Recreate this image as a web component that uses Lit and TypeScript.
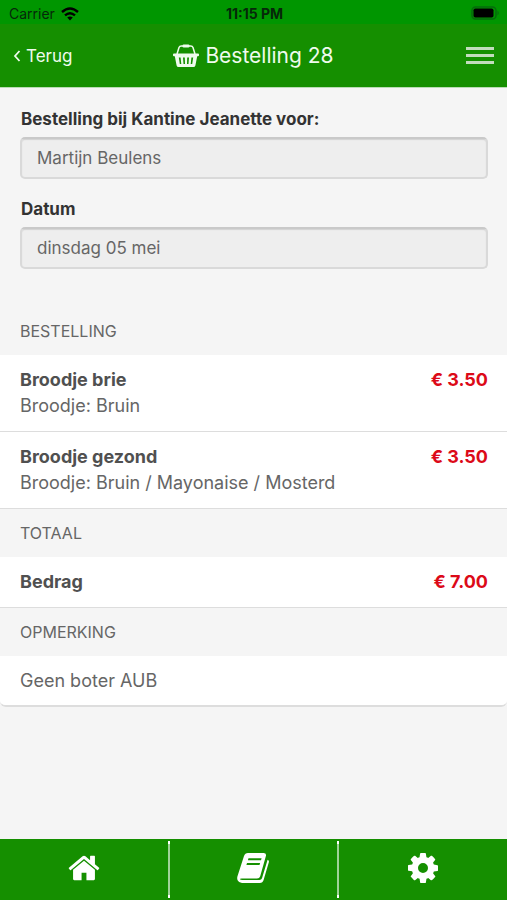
import { LitElement, html, css, svg } from "lit";
import { customElement, property } from "lit/decorators.js";

const basketIcon = svg`
  <path d="M4 10 L6 3.500 Q6.600 2 8.200 2 H17.800 Q19.400 2 20 3.500 L22 10" fill="none" stroke="currentColor" stroke-width="1.500"/>
  <rect x="9.500" y=".5" width="7" height="3" rx="1.200" fill="currentColor"/>
  <path fill="currentColor" fill-rule="evenodd" d="M1 9.500 H25 Q26 9.500 26 10.500 V11.200 Q26 12.200 25 12.200 H24.200 L22.400 21.500 Q22 23 20.500 23 H5.500 Q4 23 3.600 21.500 L1.800 12.200 H1 Q0 12.200 0 11.200 V10.500 Q0 9.500 1 9.500 Z
    M5.800 13.500 L6.800 20 H8.300 L7.600 13.500 Z M10 13.500 L10.500 20 H12 L11.800 13.500 Z M14.200 13.500 L14 20 H15.500 L16 13.500 Z M18.400 13.500 L17.700 20 H19.200 L20.200 13.500 Z"/>`;

const homeIcon = svg`<path fill="currentColor" d="M1472 992v480q0 26-19 45t-45 19h-384v-384h-256v384h-384q-26 0-45-19t-19-45v-480q0-1 .5-3t.5-3l575-474 575 474q1 2 1 6zm223-69l-62 74q-8 9-21 11h-3q-13 0-21-7l-692-577-692 577q-12 8-24 7-13-2-21-11l-62-74q-8-10-7-23.500t11-21.500l719-599q32-26 76-26t76 26l244 204v-195q0-14 9-23t23-9h192q14 0 23 9t9 23v408l219 182q10 8 11 21.500t-7 23.500z"/>`;

const bookIcon = svg`
  <path fill="currentColor" fill-rule="evenodd" d="M11 0 H26.500 Q29.700 0 28.900 3 L23.200 23.200 Q22.500 25.400 20 25.400 H4.500 Q2.800 25.400 2.900 26 Q3.100 27 5.500 27 H22.500 Q24.400 27 25 25.200 L30.600 6.800 Q32.300 7.400 31.900 9 L26.600 27 Q25.700 30 22.800 30 H5 Q1.800 30 .6 27.300 Q-.1 25.600 .4 23.500 L7 3 Q8 0 11 0 Z
    M11.500 5.200 L10.900 7.300 H24 L24.600 5.200 Z M10 10 L9.400 12.100 H22.500 L23.100 10 Z"/>`;

const gearIcon = svg`<path fill="currentColor" d="M1152 896q0-106-75-181t-181-75-181 75-75 181 75 181 181 75 181-75 75-181zm512-109v222q0 12-8 23t-20 13l-185 28q-19 54-39 91 35 50 107 138 10 12 10 25t-9 23q-27 37-99 108t-94 71q-12 0-26-9l-138-108q-44 23-91 38-16 136-29 186-7 28-36 28h-222q-14 0-24.500-8.500t-11.500-21.500l-28-184q-49-16-90-37l-141 107q-10 9-25 9-14 0-25-11-126-114-165-168-7-10-7-23 0-12 8-23 15-21 51-66.500t54-70.500q-27-50-41-99l-183-27q-13-2-21-12.500t-8-23.500v-222q0-12 8-23t19-13l186-28q14-46 39-92-40-57-107-138-10-12-10-24 0-10 9-23 26-36 98.500-107.500t94.500-71.500q13 0 26 10l138 107q44-23 91-38 16-136 29-186 7-28 36-28h222q14 0 24.500 8.500t11.500 21.500l28 184q49 16 90 37l142-107q9-9 24-9 13 0 25 10 129 119 165 170 7 8 7 22 0 12-8 23-15 21-51 66.500t-54 70.500q26 50 41 98l183 28q13 2 21 12.500t8 23.500z"/>`;

@customElement("status-bar")
class StatusBar extends LitElement {
  static styles = css`
    :host {
      display: grid;
      grid-template-columns: 1fr auto 1fr;
      align-items: center;
      height: 24px;
      padding: 0 7px 0 9px;
      box-sizing: border-box;
      background: #009600;
      color: #06280a;
      font-size: 14px;
      line-height: 20px;
    }
    .carrier { display: flex; align-items: center; gap: 6px; padding-top: 4px; }
    .time { font-weight: 700; padding-top: 4px; }
    .battery { justify-self: end; display: block; padding-top: 2px; }
  `;
  render() {
    return html`
      <span class="carrier">Carrier
        <svg width="18" height="14" viewBox="0 0 18 14" aria-hidden="true">
          <g fill="none" stroke="#000" stroke-width="2.400">
            <path d="M1 5 Q9 -2 17 5"/>
            <path d="M4 8.400 Q9 4 14 8.400"/>
          </g>
          <path d="M6.200 10.400 Q9 8.400 11.800 10.400 L9 13.400 Z"/>
        </svg>
      </span>
      <span class="time">11:15 PM</span>
      <svg class="battery" width="29" height="14" viewBox="0 0 29 14" aria-hidden="true">
        <rect x="1" y="1" width="24" height="12" rx="3.500" fill="none" stroke="#066b0c" stroke-width="1.500"/>
        <rect x="2.500" y="2.500" width="20" height="9" rx="1.800" fill="#000"/>
        <path d="M26.500 4.500 Q29 7 26.500 9.500 Z" fill="#066b0c"/>
      </svg>`;
  }
}

@customElement("order-field")
class OrderField extends LitElement {
  @property() label = "";
  @property() value = "";
  static styles = css`
    :host { display: flex; flex-direction: column; gap: 6px; }
    label { padding-left: 1px; font-size: 17px; line-height: 24px; font-weight: 700; color: #333; }
    input {
      width: 100%;
      height: 42px;
      box-sizing: border-box;
      margin: 0;
      padding: 0 15px;
      border: 2px solid #d9d9d9;
      border-top-color: #c9c9c9;
      border-radius: 5px;
      background: #eee;
      box-shadow: inset 0 1px 1px #d2d2d2;
      color: #666;
      font: inherit;
      font-size: 17px;
      outline: none;
    }
  `;
  render() {
    return html`<label for="field">${this.label}</label>
      <input id="field" type="text" readonly .value=${this.value} />`;
  }
}

interface Line { title?: string; detail?: string; price?: string; }
interface Section { heading: string; lines: Line[]; }

const sections: Section[] = [
  {
    heading: "BESTELLING",
    lines: [
      { title: "Broodje brie", detail: "Broodje: Bruin", price: "€ 3.50" },
      { title: "Broodje gezond", detail: "Broodje: Bruin / Mayonaise / Mosterd", price: "€ 3.50" },
    ],
  },
  { heading: "TOTAAL", lines: [{ title: "Bedrag", price: "€ 7.00" }] },
  { heading: "OPMERKING", lines: [{ detail: "Geen boter AUB" }] },
];

@customElement("order-list")
class OrderList extends LitElement {
  static styles = css`
    :host {
      display: block;
      overflow: hidden;
      border-radius: 0 0 6px 6px;
      border-bottom: 2px solid #ddd;
    }
    h2 {
      margin: 0;
      padding: 12px 20px;
      background: #f5f5f5;
      color: #666;
      font-size: 16px;
      line-height: 24px;
      font-weight: 400;
    }
    ul { margin: 0; padding: 0; list-style: none; }
    li {
      display: grid;
      grid-template-columns: 1fr auto;
      padding: 12px 19px 12px 20px;
      border-bottom: 1px solid #ddd;
      background: #fff;
      font-size: 18px;
      line-height: 26px;
      color: #666;
    }
    section:last-child li { border-bottom: 0; padding-bottom: 11px; }
    .title { font-weight: 700; color: #505050; }
    .price { font-weight: 700; color: #dc0a18; }
    .detail { grid-column: 1 / -1; }
  `;
  render() {
    return sections.map(
      (s) => html`<section>
        <h2>${s.heading}</h2>
        <ul>
          ${s.lines.map(
            (l) => html`<li>
              ${l.title ? html`<span class="title">${l.title}</span>` : ""}
              ${l.price ? html`<span class="price">${l.price}</span>` : ""}
              ${l.detail ? html`<span class="detail">${l.detail}</span>` : ""}
            </li>`
          )}
        </ul>
      </section>`
    );
  }
}

@customElement("app-root")
class AppRoot extends LitElement {
  static styles = css`
    :host {
      display: flex;
      flex-direction: column;
      min-height: 100vh;
      background: #f5f5f5;
      font-family: Inter, "Liberation Sans", sans-serif;
    }
    .bar {
      display: grid;
      grid-template-columns: 1fr auto 1fr;
      align-items: center;
      height: 64px;
      box-sizing: border-box;
      padding: 0 13px;
      background: #158f00;
      border-bottom: 1px solid #b9dcb4;
      color: #effbed;
    }
    .back {
      display: flex;
      align-items: center;
      gap: 5px;
      color: inherit;
      font-size: 17px;
      line-height: 24px;
      text-decoration: none;
    }
    h1 {
      display: flex;
      align-items: center;
      gap: 6px;
      margin: 0;
      font-size: 21px;
      line-height: 28px;
      font-weight: 400;
    }
    .menu {
      justify-self: end;
      display: flex;
      flex-direction: column;
      gap: 4px;
      width: 28px;
      padding: 0;
      border: 0;
      background: none;
    }
    .line { height: 3px; background: #c2dcbc; }
    main { flex: 1; }
    .fields {
      display: flex;
      flex-direction: column;
      gap: 18px;
      padding: 19px 19px 38px 20px;
    }
    .tabs {
      position: sticky;
      bottom: 0;
      display: grid;
      grid-template-columns: 1fr 2px 1fr 2px 1fr;
      height: 61px;
      background: #158f00;
    }
    .tab {
      display: flex;
      align-items: center;
      justify-content: center;
      padding-bottom: 3px;
      color: #fff;
    }
    .rule {
      margin: 2px 0;
      background: linear-gradient(#fff 3px, #9fd398 3px calc(100% - 3px), #fff calc(100% - 3px));
    }
  `;
  render() {
    return html`
      <status-bar></status-bar>
      <header class="bar">
        <a class="back" href="#terug">
          <svg width="8" height="12" viewBox="0 0 8 12" aria-hidden="true">
            <path d="M6.500 1 L2 6 L6.500 11" fill="none" stroke="currentColor" stroke-width="1.800"/>
          </svg>Terug</a>
        <h1><svg width="26" height="24" viewBox="0 0 26 24" aria-hidden="true">${basketIcon}</svg>Bestelling 28</h1>
        <button class="menu" type="button" aria-label="Menu">
          <span class="line"></span><span class="line"></span><span class="line"></span>
        </button>
      </header>
      <main>
        <form class="fields">
          <order-field label="Bestelling bij Kantine Jeanette voor:" value="Martijn Beulens"></order-field>
          <order-field label="Datum" value="dinsdag 05 mei"></order-field>
        </form>
        <order-list></order-list>
      </main>
      <nav class="tabs">
        <a class="tab" href="#home" aria-label="Home"><svg width="34" height="34" viewBox="0 0 1792 1792">${homeIcon}</svg></a>
        <span class="rule"></span>
        <a class="tab" href="#bestellingen" aria-label="Bestellingen"><svg width="32" height="30" viewBox="0 0 32 30">${bookIcon}</svg></a>
        <span class="rule"></span>
        <a class="tab" href="#instellingen" aria-label="Instellingen"><svg width="30" height="30" viewBox="128 128 1536 1536">${gearIcon}</svg></a>
      </nav>`;
  }
}
